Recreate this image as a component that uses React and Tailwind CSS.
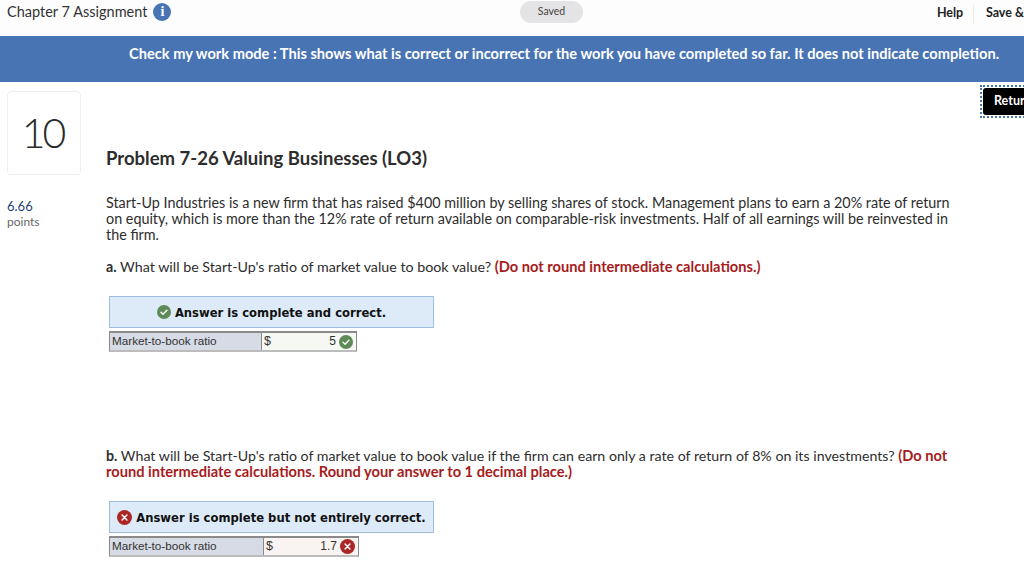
import React from "react";

function CheckIcon({ size = 14 }) {
  return (
    <svg width={size} height={size} viewBox="0 0 16 16" className="shrink-0">
      <circle cx="8" cy="8" r="8" fill="#5f8a58" />
      <path d="M4.6 8.3l2.3 2.2 4.4-4.5" fill="none" stroke="#fff" strokeWidth="1.6" strokeLinecap="round" strokeLinejoin="round" />
    </svg>
  );
}

function CrossIcon({ size = 15 }) {
  return (
    <svg width={size} height={size} viewBox="0 0 16 16" className="shrink-0">
      <circle cx="8" cy="8" r="8" fill="#ab2725" />
      <path d="M5.4 5.4l5.2 5.2M10.6 5.4l-5.2 5.2" fill="none" stroke="#fff" strokeWidth="1.6" strokeLinecap="round" />
    </svg>
  );
}

function ResultBanner({ icon, children }) {
  return (
    <div className="w-[325px] h-[32px] bg-[#ddebf8] border border-[#a0bcdc] flex items-center justify-center gap-[4px] font-['DejaVu_Sans'] font-bold text-[11.6px] text-[#111] whitespace-nowrap">
      {icon}
      <span className="mt-[1px]">{children}</span>
    </div>
  );
}

function RatioRow({ value, icon, labelW, cellW, cellBg }) {
  return (
    <div className="mt-[3px] flex h-[21px] border-t-2 border-x border-b-2 border-t-[#8a8a8a] border-x-[#8a8a8a] border-b-[#bcbcbc] w-fit font-['Liberation_Sans'] text-[11.7px] text-[#333]">
      <div className={`${labelW} bg-[#d6dbe6] border-r border-[#8a8a8a] pl-[2px] pb-[1px] flex items-center`}>Market-to-book ratio</div>
      <div className={`${cellW} ${cellBg} flex items-center pl-[2px] pr-[3px]`}>
        <span className="text-[12.5px] pb-[1px]">$</span>
        <span className="ml-auto mr-[3px] text-[12px] pb-[1px]">{value}</span>
        {icon}
      </div>
    </div>
  );
}

export default function App() {
  return (
    <div className="w-[1024px] h-[571px] overflow-hidden bg-white font-['Lato',sans-serif] text-[#2d2d2d]">
      {/* top bar */}
      <div className="h-[36px] bg-[#fdfdfd] flex items-center pl-[7px] pb-[13px] relative">
        <span className="text-[14.5px] text-[#333]">Chapter 7 Assignment</span>
        <span className="ml-[6px] w-[18px] h-[18px] rounded-full bg-[#4874b4] text-white flex items-center justify-center font-['Liberation_Serif'] font-bold text-[14px]">i</span>
        <div className="absolute left-[520px] top-[1px] w-[63px] h-[22px] rounded-full bg-[#e4e3e6] flex items-center justify-center text-[10.5px] text-[#444]">Saved</div>
        <div className="ml-auto mt-[4px] flex items-center h-[20px] font-bold text-[12.5px] text-[#222] whitespace-nowrap">
          <span className="w-[37px] h-full border-r border-[#ececec] flex items-center">Help</span>
          <span className="ml-[12px]">Save &amp;</span>
        </div>
      </div>

      {/* check my work banner */}
      <div className="h-[46px] bg-[#4874b4] text-white font-bold text-[14.64px] pt-[7px] pl-[129px] whitespace-nowrap">
        Check my work mode : This shows what is correct or incorrect for the work you have completed so far. It does not indicate completion.
      </div>

      <div className="flex relative">
        {/* return button */}
        <div className="absolute left-[980px] top-[3px] w-[60px] h-[33px] border-2 border-dotted border-[#4874b4] p-px">
          <div className="h-full bg-black rounded-[3px] text-white font-bold text-[12.5px] pl-[11px] flex items-center">Return</div>
        </div>

        {/* question number column */}
        <div className="w-[106px] shrink-0 pl-[7px] pt-[9px]">
          <div className="w-[74px] h-[84px] border border-[#efefef] rounded-[4px] flex items-center justify-center text-[41px] font-light tracking-[-3px] pr-[3px] text-[#2a2a2a]">10</div>
          <div className="mt-[23px] text-[13px] text-[#1f3f78] leading-[16px]">6.66</div>
          <div className="text-[12px] text-[#666] leading-[16px]">points</div>
        </div>

        {/* problem body */}
        <div className="flex-1 pt-[65px] text-[14.35px] leading-[16px]">
          <h1 className="font-bold text-[18.5px] leading-[22px] text-[#2d2d2d]">Problem 7-26 Valuing Businesses (LO3)</h1>
          <p className="mt-[26px] w-[850px]">
            Start-Up Industries is a new firm that has raised $400 million by selling shares of stock. Management plans to earn a 20% rate of return on equity, which is more than the 12% rate of return available on comparable-risk investments. Half of all earnings will be reinvested in the firm.
          </p>
          <p className="mt-[16px] text-[14.25px]">
            <b>a.</b> What will be Start-Up's ratio of market value to book value? <b className="text-[#a61c1c] text-[14.65px]">(Do not round intermediate calculations.)</b>
          </p>
          <div className="mt-[21px] ml-[3px]">
            <ResultBanner icon={<CheckIcon />}>Answer is complete and correct.</ResultBanner>
            <RatioRow value="5" icon={<CheckIcon />} labelW="w-[152px]" cellW="w-[94px]" cellBg="bg-[#f5f8f3]" />
          </div>
          <p className="mt-[96px] w-[850px] text-[14.2px]">
            <b>b.</b> What will be Start-Up's ratio of market value to book value if the firm can earn only a rate of return of 8% on its investments? <b className="text-[#a61c1c] text-[14.65px]">(Do not round intermediate calculations. Round your answer to 1 decimal place.)</b>
          </p>
          <div className="mt-[21px] ml-[3px]">
            <ResultBanner icon={<CrossIcon />}>Answer is complete but not entirely correct.</ResultBanner>
            <RatioRow value="1.7" icon={<CrossIcon />} labelW="w-[154px]" cellW="w-[94px]" cellBg="bg-[#f9f3f2]" />
          </div>
        </div>
      </div>
    </div>
  );
}
